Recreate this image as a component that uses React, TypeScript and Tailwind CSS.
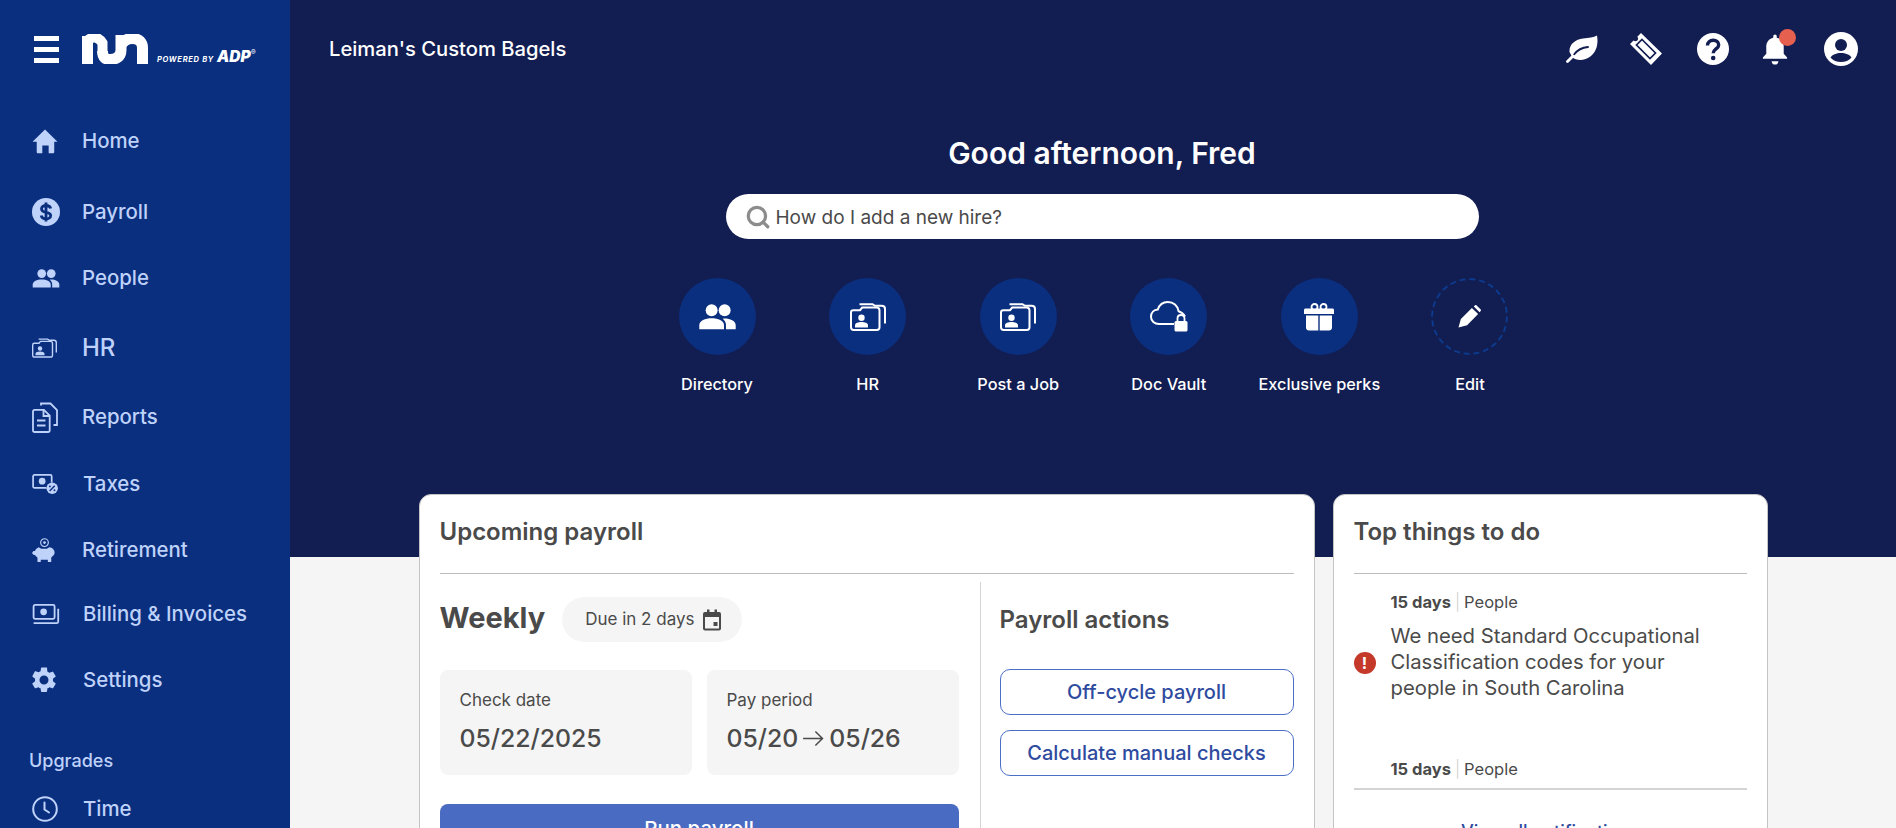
import React from 'react';
import { Search } from 'lucide-react';

type IconProps = { className?: string };

const HomeIcon = ({ className }: IconProps) => (
  <svg viewBox="0 0 26 26" className={className} fill="currentColor">
    <path d="M13 .5 26 13.2h-3.4v10.6c0 .8-.6 1.4-1.4 1.4h-4.4v-8h-6.6v8H5.800c-.8 0-1.400-.6-1.400-1.400V13.200H0z" />
  </svg>
);

const DollarIcon = ({ className }: IconProps) => (
  <svg viewBox="0 0 28 28" className={className}>
    <circle cx="14" cy="14" r="14" fill="currentColor" />
    <path d="M18.700 10.500c-.5-1.800-2.300-3-4.700-3-2.600 0-4.500 1.400-4.500 3.400 0 4.600 9.200 2.300 9.200 6.600 0 2-2 3.400-4.700 3.400-2.500 0-4.400-1.300-4.800-3.300M14 4.500v19" fill="none" stroke="#0b2f7f" strokeWidth="2.800" />
  </svg>
);

const PeopleIcon = ({ className }: IconProps) => (
  <svg viewBox="0 0 28 20" className={className} fill="currentColor">
    <circle cx="9.500" cy="4.800" r="4.600" />
    <circle cx="19.500" cy="4.800" r="4.600" />
    <path d="M0 19.500v-3.200c0-3.300 4.600-5.300 9.500-5.300s9.500 2 9.500 5.300v3.200z" />
    <path d="M20.500 19.500v-3.500c0-2-1-3.500-2.500-4.700.6-.1 1.200-.2 1.800-.2 3.600 0 8.200 1.800 8.200 5v3.400z" />
  </svg>
);

const FolderIcon = ({ className }: IconProps) => (
  <svg viewBox="0 0 36 28" className={className} fill="none" stroke="currentColor" strokeWidth="2">
    <path d="M1 9.500C1 8.100 2 7.200 3.300 7.200H10l2.200-2.700h14.300c1.900 0 3 1.100 3 3v16.800c0 1.500-1.100 2.700-2.700 2.700H3.700C2.100 27 1 25.800 1 24.300z" />
    <path d="M9.500 1.200h13l2.400 1.600h6.600c2.300 0 3.500 1.200 3.500 3.200V20.500" />
    <circle cx="11.500" cy="14.800" r="3.200" fill="currentColor" stroke="none" />
    <path d="M5 24.500v-2.200c0-2 3.300-3.200 6.500-3.200s6.500 1.200 6.500 3.200v2.200z" fill="currentColor" stroke="none" />
  </svg>
);

const ReportsIcon = ({ className }: IconProps) => (
  <svg viewBox="0 0 26 31" className={className} fill="none" stroke="currentColor" strokeWidth="1.800">
    <path d="M1 9.500c0-1 .7-1.700 1.700-1.700h9.200l5.800 5.800v14.600c0 1-.7 1.800-1.800 1.800H2.800c-1 0-1.800-.8-1.800-1.800z" />
    <path d="M11.500 8v6h6" />
    <path d="M5 18.500h8.500M5 23.500h8.500" strokeWidth="2.200" />
    <path d="M9 3.500V1.500h9.500l6.500 6.500v15h-3.500" />
  </svg>
);

const TaxesIcon = ({ className }: IconProps) => (
  <svg viewBox="0 0 28 22" className={className}>
    <path d="M15 14.500H2.500c-.8 0-1.500-.7-1.500-1.500V2.500C1 1.700 1.700 1 2.500 1H19c.8 0 1.500.7 1.500 1.500V9" fill="none" stroke="currentColor" strokeWidth="1.800" />
    <circle cx="10.500" cy="7.500" r="3.500" fill="currentColor" />
    <circle cx="21" cy="15" r="6" fill="currentColor" />
    <path d="M18.300 17.800 23.700 12.200" stroke="#0b2f7f" strokeWidth="1.500" />
    <circle cx="18.600" cy="13" r="1" fill="#0b2f7f" />
    <circle cx="23.400" cy="17" r="1" fill="#0b2f7f" />
  </svg>
);

const PiggyIcon = ({ className }: IconProps) => (
  <svg viewBox="0 0 26 26" className={className}>
    <path d="M5 11c-1 .6-1.500 1.500-1.800 2.500H1.500L0 15.500l1.500 2 1.900.4c.5 1 1.300 1.900 2.300 2.500V25h3.400v-2.500h7.400V25H20v-4.800c2-1.400 3.500-2.800 3.500-5 0-3-2.500-5.200-5.500-5.500l-2.500 1.500h-6L7 9.500z" fill="currentColor" />
    <circle cx="13" cy="4.800" r="4" fill="none" stroke="currentColor" strokeWidth="1.200" />
    <circle cx="13" cy="4.800" r="1.400" fill="currentColor" />
  </svg>
);

const BillingIcon = ({ className }: IconProps) => (
  <svg viewBox="0 0 28 22" className={className} fill="none" stroke="currentColor" strokeWidth="1.900">
    <rect x="1" y="1" width="22" height="14.500" rx="1.500" />
    <circle cx="11.500" cy="8.200" r="3.500" fill="currentColor" stroke="none" />
    <path d="M1 20h24.500c.8 0 1.300-.5 1.300-1.300V5" />
  </svg>
);

const GearIcon = ({ className }: IconProps) => (
  <svg viewBox="0 0 24 24" className={className} fill="currentColor">
    <path d="M19.140 12.940c.04-.3.060-.61.060-.94s-.020-.64-.070-.94l2.030-1.580a.49.490 0 0 0 .120-.61l-1.920-3.320a.49.490 0 0 0-.59-.22l-2.390.96a7 7 0 0 0-1.620-.94l-.36-2.540A.48.480 0 0 0 13.920 2h-3.840a.47.470 0 0 0-.47.410l-.36 2.540c-.59.240-1.130.57-1.620.94l-2.390-.96a.48.480 0 0 0-.59.220L2.740 8.870a.48.480 0 0 0 .120.610l2.030 1.580c-.05.3-.09.63-.09.940s.020.64.070.94l-2.030 1.580a.49.490 0 0 0-.120.61l1.920 3.320c.12.220.37.290.59.220l2.390-.96c.5.380 1.030.7 1.620.94l.36 2.540c.05.240.24.410.48.410h3.840c.24 0 .44-.17.47-.41l.36-2.540c.59-.24 1.130-.56 1.620-.94l2.390.96c.22.080.47 0 .59-.22l1.920-3.320a.48.480 0 0 0-.12-.61zM12 15.600a3.600 3.600 0 1 1 0-7.200 3.600 3.600 0 0 1 0 7.200z" />
  </svg>
);

const ClockIcon = ({ className }: IconProps) => (
  <svg viewBox="0 0 26 26" className={className} fill="none" stroke="currentColor" strokeWidth="2">
    <circle cx="13" cy="13" r="11.800" />
    <path d="M12.500 6.500v7l4.500 3" strokeLinecap="round" />
  </svg>
);

const LeafIcon = ({ className }: IconProps) => (
  <svg viewBox="0 0 32 28" className={className}>
    <path d="M3.500 17C3 9 9.500 4.500 17 3.500c6-.7 10.500-1 14-3 1.500 8.500-.5 16-6 20.500-6 5-14.500 5-18.500 1.500z" fill="currentColor" />
    <path d="M8 19.500C11 15.500 16 12.500 22 12" fill="none" stroke="#121d51" strokeWidth="1.800" strokeLinecap="round" />
    <path d="M1.500 26.500 7 21" fill="none" stroke="currentColor" strokeWidth="2.800" strokeLinecap="round" />
  </svg>
);

const TicketIcon = ({ className }: IconProps) => (
  <svg viewBox="0 0 32 32" className={className} fill="none">
    <path d="M11 0 32 20.500 21 32 0 11l3.500-3.500c1.200 1 2.800 1 3.800 0s1-2.600 0-3.800z" fill="currentColor" />
    <path d="m12 6.500 13.500 13.500-5.500 5.500L6.500 12z" stroke="#121d51" strokeWidth="1.700" />
  </svg>
);

const HelpIcon = ({ className }: IconProps) => (
  <svg viewBox="0 0 32 32" className={className}>
    <circle cx="16" cy="16" r="16" fill="currentColor" />
    <path d="M10.500 12.500c0-3.200 2.400-5.300 5.700-5.300 3.200 0 5.500 1.900 5.500 4.700 0 3.900-5.500 4.200-5.500 8.300" fill="none" stroke="#121d51" strokeWidth="3.400" />
    <circle cx="16.200" cy="25" r="2.300" fill="#121d51" />
  </svg>
);

const BellIcon = ({ className }: IconProps) => (
  <svg viewBox="0 0 26 32" className={className} fill="currentColor">
    <path d="M13 .5c1 0 1.800.8 1.800 1.800v1.500c4.600 1 7.200 4.800 7.200 9.200v7.500l3.500 3.800v1.200H.5v-1.200L4 20.500V13c0-4.400 2.600-8.200 7.200-9.200V2.300c0-1 .8-1.800 1.800-1.800z" />
    <path d="M9.500 28h7c0 2-1.500 3.500-3.500 3.500S9.500 30 9.500 28z" />
  </svg>
);

const AvatarIcon = ({ className }: IconProps) => (
  <svg viewBox="0 0 34 34" className={className}>
    <circle cx="17" cy="17" r="17" fill="currentColor" />
    <circle cx="17" cy="13" r="6" fill="#121d51" />
    <path d="M6.500 25.500c1.800-3 6-4.500 10.500-4.500s8.700 1.500 10.500 4.500C25 28.500 21.200 30 17 30s-8-1.500-10.500-4.500z" fill="#121d51" />
  </svg>
);

const CloudLockIcon = ({ className }: IconProps) => (
  <svg viewBox="0 0 38 32" className={className}>
    <path d="M24 23H9c-4.500 0-8-2.900-8-7.300 0-4 2.900-6.900 6.800-7.200C9.300 4 13.100 1 17.800 1c5.700 0 9.900 3.800 10.800 9.200 2.600.8 5 2.600 6.400 5.300" fill="none" stroke="currentColor" strokeWidth="2" />
    <rect x="24.500" y="20" width="13" height="10.500" rx="1.500" fill="currentColor" />
    <path d="M27.500 20v-2.500c0-2 1.500-3.500 3.500-3.500s3.500 1.500 3.500 3.500V20" fill="none" stroke="currentColor" strokeWidth="1.800" />
  </svg>
);

const GiftIcon = ({ className }: IconProps) => (
  <svg viewBox="0 0 30 28" className={className}>
    <path d="M1.500 5.500h27c.8 0 1.500.7 1.500 1.500v4H0V7c0-.8.700-1.500 1.500-1.500z" fill="currentColor" />
    <path d="M2 12.500h12.300V27.500H5c-1.700 0-3-1.300-3-3zM15.700 12.500H28v12c0 1.700-1.300 3-3 3h-9.300z" fill="currentColor" />
    <circle cx="10.500" cy="4" r="3" fill="none" stroke="currentColor" strokeWidth="1.800" />
    <circle cx="19.500" cy="4" r="3" fill="none" stroke="currentColor" strokeWidth="1.800" />
  </svg>
);

const PencilIcon = ({ className }: IconProps) => (
  <svg viewBox="0 0 24 24" className={className} fill="currentColor">
    <path d="M.5 23.500 3 14.500 14.500 3l6.500 6.500L9.500 21z" />
    <path d="m16.500 1.500 1.300-1.200c.4-.4 1-.4 1.400 0l4.500 4.500c.4.400.4 1 0 1.400l-1.200 1.300z" />
  </svg>
);

const CalendarIcon = ({ className }: IconProps) => (
  <svg viewBox="0 0 18 22" className={className}>
    <path d="M2 4h14c.6 0 1 .4 1 1v14.500c0 .6-.4 1-1 1H2c-.6 0-1-.4-1-1V5c0-.6.4-1 1-1z" fill="none" stroke="currentColor" strokeWidth="2" />
    <path d="M1 3.500h16V8H1zM4 .5h2.500V5H4zM11.500.5H14V5h-2.500z" fill="currentColor" />
    <rect x="10.500" y="13" width="4" height="4" fill="currentColor" />
  </svg>
);

const ArrowIcon = ({ className }: IconProps) => (
  <svg viewBox="0 0 22 18" className={className} fill="none" stroke="currentColor" strokeWidth="1.600">
    <path d="M0 9h20.500M13 1.500 20.500 9 13 16.500" />
  </svg>
);

const RunLogo = () => (
  <svg viewBox="0 0 66 30" className="w-[66px] h-[30px] text-white" fill="none" stroke="currentColor">
    <path d="M5.500 30V2" strokeWidth="11" />
    <path d="M5 7C10 2 16 2 20.500 9V18" strokeWidth="10" />
    <path d="M20.500 17C20.500 24 24 25.500 28 25.500 34 25.500 39 23 39 16V1" strokeWidth="11" />
    <path d="M39 11C42 6 47 4.500 50 4.500 57 4.500 60.500 8 60.500 14V30" strokeWidth="11" />
  </svg>
);

const navItems: { label: string; icon: React.ReactNode; gap: string; textCls?: string }[] = [
  { label: 'Home', icon: <HomeIcon className="w-[26px] h-[25px]" />, gap: 'mt-[21px]' },
  { label: 'Payroll', icon: <DollarIcon className="w-[28px] h-[28px]" />, gap: 'mt-[31px]' },
  { label: 'People', icon: <PeopleIcon className="w-[28px] h-[19px]" />, gap: 'mt-[26px]' },
  { label: 'HR', icon: <FolderIcon className="w-[25px] h-[20px]" />, gap: 'mt-[30px]', textCls: 'text-[24px] font-medium' },
  { label: 'Reports', icon: <ReportsIcon className="w-[26px] h-[31px]" />, gap: 'mt-[29px]' },
  { label: 'Taxes', icon: <TaxesIcon className="w-[27px] h-[21px]" />, gap: 'mt-[27px]', textCls: 'ml-[1px] text-[20.400px] font-medium' },
  { label: 'Retirement', icon: <PiggyIcon className="w-[25px] h-[25px]" />, gap: 'mt-[26px]' },
  { label: 'Billing & Invoices', icon: <BillingIcon className="w-[28px] h-[21px]" />, gap: 'mt-[24px]', textCls: 'ml-[1px] text-[20.400px] font-medium' },
  { label: 'Settings', icon: <GearIcon className="w-[30px] h-[30px] -ml-[3px] -mr-[1px]" />, gap: 'mt-[26px]', textCls: 'ml-[1px] text-[20.400px] font-medium' },
];

const quickLinks: { label: string; icon: React.ReactNode; dashed?: boolean }[] = [
  { label: 'Directory', icon: <PeopleIcon className="w-[37px] h-[26px]" /> },
  { label: 'HR', icon: <FolderIcon className="w-[36px] h-[28px]" /> },
  { label: 'Post a Job', icon: <FolderIcon className="w-[36px] h-[28px]" /> },
  { label: 'Doc Vault', icon: <CloudLockIcon className="w-[38px] h-[32px]" /> },
  { label: 'Exclusive perks', icon: <GiftIcon className="w-[30px] h-[28px]" /> },
  { label: 'Edit', icon: <PencilIcon className="w-[23px] h-[23px]" />, dashed: true },
];

const TodoMeta = () => (
  <div className="text-[16.500px] leading-[22px] text-[#4a4a4a]">
    <span className="font-bold">15 days</span>
    <span className="text-[#d0d0d0] mx-[4px] font-light">|</span>
    <span>People</span>
  </div>
);

export default function App() {
  return (
    <div className="flex h-[828px] w-full overflow-hidden bg-[#f5f5f5] font-['Inter','Liberation_Sans',sans-serif]">
      {/* Sidebar */}
      <aside className="w-[290px] shrink-0 bg-[#0b2f7f] text-[#bfd2fa]">
        <div className="flex items-center h-[100px] pl-[34px] pb-[2px] text-white">
          <div className="flex flex-col gap-[6px] w-[25px]">
            <span className="block h-[5px] bg-white" />
            <span className="block h-[5px] bg-white" />
            <span className="block h-[5px] bg-white" />
          </div>
          <div className="ml-[23px]"><RunLogo /></div>
          <div className="flex items-baseline self-end mb-[33px] ml-[9px] italic font-bold whitespace-nowrap">
            <span className="text-[7.500px] tracking-[0.700px]">POWERED BY</span>
            <span className="text-[15.500px] font-black ml-[3px] leading-none">ADP</span>
            <span className="text-[7px] self-start -mt-[1px]">®</span>
          </div>
        </div>
        <nav>
          {navItems.map((item) => (
            <div key={item.label} className={`flex items-center h-[40px] pl-[32px] ${item.gap}`}>
              <div className="w-[50px] flex items-center">{item.icon}</div>
              <span className={item.textCls ?? 'text-[20.400px] font-medium'}>{item.label}</span>
            </div>
          ))}
        </nav>
        <div className="mt-[49px] pl-[29px] text-[18px] leading-[24px] font-medium">Upgrades</div>
        <div className="flex items-center h-[26px] pl-[32px] mt-[23px]">
          <ClockIcon className="w-[26px] h-[26px] mr-[25px]" />
          <span className="text-[20.400px] font-medium">Time</span>
        </div>
      </aside>

      {/* Main */}
      <main className="flex-1 min-w-0 relative">
        <section className="h-[557px] bg-[#121d51] text-white">
          <div className="flex items-center justify-between h-[98px] pl-[39px] pr-[38px]">
            <span className="text-[20.200px] font-medium">Leiman's Custom Bagels</span>
            <div className="flex items-center">
              <LeafIcon className="w-[32px] h-[28px]" />
              <TicketIcon className="w-[32px] h-[32px] ml-[32px]" />
              <HelpIcon className="w-[32px] h-[32px] ml-[35px]" />
              <div className="relative ml-[33px]">
                <BellIcon className="w-[26px] h-[31px]" />
                <span className="absolute -top-[5px] left-[17px] w-[17px] h-[17px] rounded-full bg-[#e5604f]" />
              </div>
              <AvatarIcon className="w-[34px] h-[34px] ml-[36px]" />
            </div>
          </div>
          <div className="flex flex-col items-center">
            <h1 className="ml-[18px] mt-[36px] text-[30px] leading-[38px] font-semibold">Good afternoon, Fred</h1>
            <div className="ml-[18px] mt-[22px] flex items-center w-[753px] h-[45px] rounded-full bg-white pl-[19px] text-[#4a4a4a]">
              <Search className="w-[26px] h-[26px] text-[#8c8c8c]" strokeWidth={3} />
              <span className="ml-[5px] pt-[3px] text-[19px]">How do I add a new hire?</span>
            </div>
            <div className="flex mt-[39px] ml-[1px]">
              {quickLinks.map((link) => (
                <div key={link.label} className="flex flex-col items-center w-[150.600px]">
                  <div className={`flex items-center justify-center w-[77px] h-[77px] rounded-full ${link.dashed ? 'border-2 border-dashed border-[#0d3a8c]' : 'bg-[#0b2f7f]'}`}>
                    {link.icon}
                  </div>
                  <span className="mt-[17px] text-[16.300px] leading-[24px] font-medium whitespace-nowrap">{link.label}</span>
                </div>
              ))}
            </div>
          </div>
        </section>

        {/* Cards */}
        <div className="flex justify-center gap-[18px] -mt-[63px] text-[#4a4a4a]">
          <div className="w-[896px] h-[400px] shrink-0 bg-white rounded-t-[12px] border border-[#c4c4c4] px-[20px]">
            <div className="h-[79px] border-b border-[#bdbdbd] flex items-center pb-[4px]">
              <h2 className="text-[24px] font-semibold">Upcoming payroll</h2>
            </div>
            <div className="flex">
              <div className="w-[519px] shrink-0 pt-[21px]">
                <div className="flex items-center h-[45px]">
                  <span className="text-[29px] font-bold">Weekly</span>
                  <div className="ml-[17px] flex items-center h-[45px] w-[180px] rounded-full bg-[#f5f5f5] pl-[23px] text-[17px] mt-[4px]">
                    <span className="whitespace-nowrap">Due in 2 days</span>
                    <CalendarIcon className="w-[18px] h-[22px] ml-[9px]" />
                  </div>
                </div>
                <div className="grid grid-cols-2 gap-[15px] mt-[30px]">
                  <div className="h-[105px] rounded-[8px] bg-[#f5f5f5] pl-[20px] pt-[18px]">
                    <div className="text-[17px] leading-[24px]">Check date</div>
                    <div className="mt-[9px] text-[24.800px] leading-[34px] font-medium">05/22/2025</div>
                  </div>
                  <div className="h-[105px] rounded-[8px] bg-[#f5f5f5] pl-[20px] pt-[18px]">
                    <div className="text-[17px] leading-[24px]">Pay period</div>
                    <div className="mt-[9px] text-[24.800px] leading-[34px] font-medium flex items-center gap-[5px]">
                      <span>05/20</span>
                      <ArrowIcon className="w-[21px] h-[17px]" />
                      <span>05/26</span>
                    </div>
                  </div>
                </div>
                <div className="mt-[29px] h-[50px] rounded-[8px] bg-[#4a6bc2] text-white text-[20.500px] font-medium flex items-center justify-center">
                  Run payroll
                </div>
              </div>
              <div className="ml-[21px] mt-[8px] h-[320px] border-l border-[#d4d4d4] pl-[19px] flex-1">
                <h3 className="mt-[15px] text-[24px] leading-[46px] font-semibold">Payroll actions</h3>
                <div className="mt-[26px] flex flex-col gap-[15px]">
                  <div className="h-[46px] rounded-[10px] border border-[#4a6fc4] text-[#2f4ba0] text-[20px] font-medium flex items-center justify-center">Off-cycle payroll</div>
                  <div className="h-[46px] rounded-[10px] border border-[#4a6fc4] text-[#2f4ba0] text-[20px] font-medium flex items-center justify-center">Calculate manual checks</div>
                </div>
              </div>
            </div>
          </div>

          <div className="w-[435px] h-[400px] shrink-0 bg-white rounded-t-[12px] border border-[#c4c4c4] px-[20px]">
            <div className="h-[79px] border-b border-[#bdbdbd] flex items-center pb-[4px]">
              <h2 className="text-[24px] font-semibold">Top things to do</h2>
            </div>
            <div className="pl-[37px] pt-[17px] relative">
              <TodoMeta />
              <p className="mt-[10px] text-[20.300px] leading-[26px] w-[345px]">We need Standard Occupational Classification codes for your people in South Carolina</p>
              <div className="mt-[57px]"><TodoMeta /></div>
              <span className="absolute left-0 top-[78px] w-[22px] h-[22px] rounded-full bg-[#c5392b] text-white text-[16px] font-bold flex items-center justify-center">!</span>
            </div>
            <div className="mt-[8px] border-t-2 border-[#d4d4d4] pt-[28px] text-center text-[#2f4ba0] text-[18px] font-medium">View all notifications</div>
          </div>
        </div>
      </main>
    </div>
  );
}
